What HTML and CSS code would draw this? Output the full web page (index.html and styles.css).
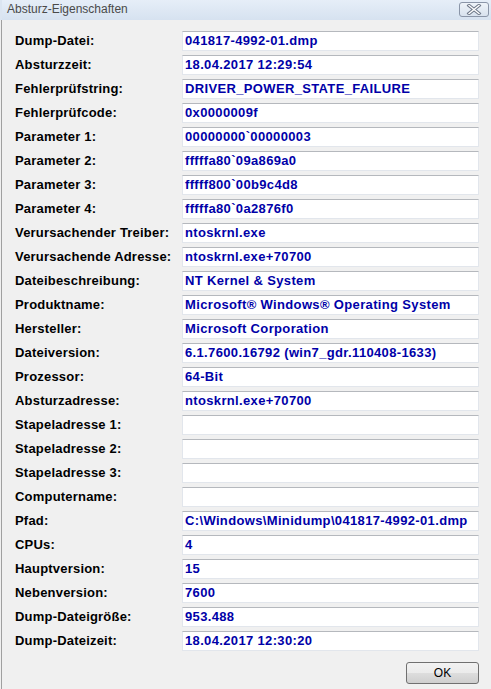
FILE: index.html
```html
<!DOCTYPE html>
<html lang="de">
<head>
<meta charset="utf-8">
<title>Absturz-Eigenschaften</title>
<link rel="stylesheet" href="styles.css">
</head>
<body>
<div class="window">
  <div class="titlebar">
    <span class="title">Absturz-Eigenschaften</span>
    <button class="close" aria-label="Schließen">
      <svg width="16" height="11" viewBox="0 0 16 11">
        <path d="M3 1.5 L13 9.5 M13 1.5 L3 9.5" stroke="#6d7788" stroke-width="3.4" stroke-linecap="square" fill="none"/>
        <path d="M3 1.5 L13 9.5 M13 1.5 L3 9.5" stroke="#ffffff" stroke-width="1.4" stroke-linecap="square" fill="none"/>
      </svg>
    </button>
  </div>
  <div class="content">
    <div class="props">
      <div class="label">Dump-Datei:</div><div class="field">041817-4992-01.dmp</div>
      <div class="label">Absturzzeit:</div><div class="field">18.04.2017 12:29:54</div>
      <div class="label">Fehlerprüfstring:</div><div class="field">DRIVER_POWER_STATE_FAILURE</div>
      <div class="label">Fehlerprüfcode:</div><div class="field">0x0000009f</div>
      <div class="label">Parameter 1:</div><div class="field">00000000`00000003</div>
      <div class="label">Parameter 2:</div><div class="field">fffffa80`09a869a0</div>
      <div class="label">Parameter 3:</div><div class="field">fffff800`00b9c4d8</div>
      <div class="label">Parameter 4:</div><div class="field">fffffa80`0a2876f0</div>
      <div class="label">Verursachender Treiber:</div><div class="field">ntoskrnl.exe</div>
      <div class="label">Verursachende Adresse:</div><div class="field">ntoskrnl.exe+70700</div>
      <div class="label">Dateibeschreibung:</div><div class="field">NT Kernel &amp; System</div>
      <div class="label">Produktname:</div><div class="field">Microsoft® Windows® Operating System</div>
      <div class="label">Hersteller:</div><div class="field">Microsoft Corporation</div>
      <div class="label">Dateiversion:</div><div class="field">6.1.7600.16792 (win7_gdr.110408-1633)</div>
      <div class="label">Prozessor:</div><div class="field">64-Bit</div>
      <div class="label">Absturzadresse:</div><div class="field">ntoskrnl.exe+70700</div>
      <div class="label">Stapeladresse 1:</div><div class="field"></div>
      <div class="label">Stapeladresse 2:</div><div class="field"></div>
      <div class="label">Stapeladresse 3:</div><div class="field"></div>
      <div class="label">Computername:</div><div class="field"></div>
      <div class="label">Pfad:</div><div class="field">C:\Windows\Minidump\041817-4992-01.dmp</div>
      <div class="label">CPUs:</div><div class="field">4</div>
      <div class="label">Hauptversion:</div><div class="field">15</div>
      <div class="label">Nebenversion:</div><div class="field">7600</div>
      <div class="label">Dump-Dateigröße:</div><div class="field">953.488</div>
      <div class="label">Dump-Dateizeit:</div><div class="field">18.04.2017 12:30:20</div>
    </div>
    <div class="actions">
      <button class="ok">OK</button>
    </div>
  </div>
</div>
</body>
</html>
```

FILE: styles.css
```css
html, body {
  margin: 0;
  padding: 0;
  background: #f0f0f0;
}

.window {
  width: 491px;
  height: 689px;
  box-sizing: border-box;
  background: #f0f0f0;
  overflow: hidden;
  font-family: "Liberation Sans", Arial, sans-serif;
}

.titlebar {
  height: 20px;
  display: flex;
  align-items: flex-start;
  justify-content: space-between;
  background: linear-gradient(#e6eef8, #d6e2f0);
  border-left: 2px solid #dbe5f1;
  box-sizing: border-box;
}

.title {
  font-size: 12px;
  color: #4a4a4a;
  padding: 2px 0 0 5px;
  line-height: 15px;
}

.close {
  width: 30px;
  height: 15px;
  margin: 2px 2px 0 0;
  padding: 0;
  display: flex;
  align-items: center;
  justify-content: center;
  border: 1px solid #8a95a8;
  border-radius: 3px;
  background: linear-gradient(#eef3f9, #d8e2ee);
}

.content {
  border-left: 1px solid #a0a0a0;
  margin-left: 1px;
  height: 669px;
  box-sizing: border-box;
  padding: 11px 0 0 13px;
}

.props {
  display: grid;
  grid-template-columns: 167px 297px;
  grid-auto-rows: 20px;
  row-gap: 4px;
}

.label {
  font-size: 13px;
  font-weight: bold;
  color: #000;
  line-height: 20px;
  letter-spacing: 0.2px;
}

.field {
  background: #fff;
  border: 1px solid #e2e6ec;
  border-top-color: #b5b8bd;
  box-sizing: border-box;
  font-size: 13px;
  font-weight: bold;
  color: #0000a8;
  line-height: 18px;
  padding-left: 2px;
  letter-spacing: 0.35px;
  white-space: nowrap;
  overflow: hidden;
}

.actions {
  display: flex;
  justify-content: flex-end;
  width: 464px;
  margin-top: 11px;
}

.ok {
  width: 73px;
  height: 22px;
  border: 1px solid #707070;
  border-radius: 3px;
  background: linear-gradient(#f2f2f2 0%, #ebebeb 50%, #dddddd 51%, #cfcfcf 100%);
  font-family: "Liberation Sans", Arial, sans-serif;
  font-size: 12px;
  color: #000;
  padding: 0;
}
```
